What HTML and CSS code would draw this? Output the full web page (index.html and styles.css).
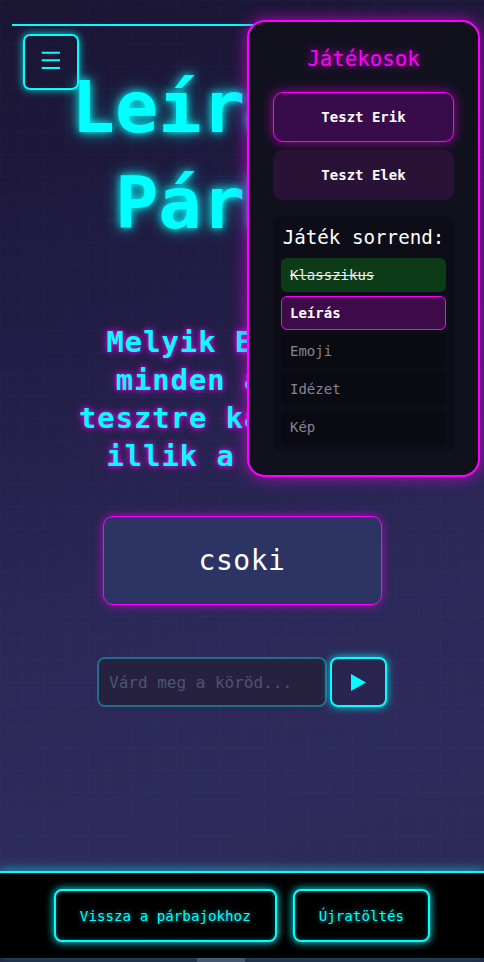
FILE: index.html
```html
<!DOCTYPE html>
<html lang="hu">
<head>
<meta charset="utf-8">
<title>Leírásos Párbaj</title>
<link rel="stylesheet" href="styles.css">
</head>
<body>
<div class="app">
  <main class="main">
    <div class="topline"></div>
    <h1 class="title">Leírásos<br>Párbaj</h1>
    <h2 class="question">Melyik Elekre a<br>minden alapján<br>tesztre kapott szó<br>illik a jobban?</h2>
    <div class="card">csoki</div>
    <div class="answer">
      <input class="answer-input" type="text" placeholder="Várd meg a köröd..." readonly>
      <button class="send-btn" type="button" aria-label="Küldés">
        <svg width="15" height="17" viewBox="0 0 15 17"><path d="M0 0 L15 8.5 L0 17 Z" fill="#00ffff"/></svg>
      </button>
    </div>
  </main>
  <footer class="footer">
    <button class="foot-btn" type="button">Vissza a párbajokhoz</button>
    <button class="foot-btn" type="button">Újratöltés</button>
  </footer>
  <div class="hscroll"><div class="hscroll-thumb"></div></div>

  <button class="menu-btn" type="button" aria-label="Menü">
    <svg width="52" height="52" viewBox="0 0 52 52"><path d="M16.7 16.7 H35 M16.7 24.3 H35 M16.7 32 H35" stroke="#00ffff" stroke-width="2" fill="none"/></svg>
  </button>

  <aside class="panel">
    <h3 class="panel-title">Játékosok</h3>
    <div class="players">
      <div class="player player-active">Teszt Erik</div>
      <div class="player">Teszt Elek</div>
    </div>
    <div class="order">
      <div class="order-title">Játék sorrend:</div>
      <div class="order-list">
        <div class="order-item done">Klasszikus</div>
        <div class="order-item current">Leírás</div>
        <div class="order-item">Emoji</div>
        <div class="order-item">Idézet</div>
        <div class="order-item">Kép</div>
      </div>
    </div>
  </aside>
</div>
</body>
</html>
```

FILE: styles.css
```css
* {
  box-sizing: border-box;
  margin: 0;
  padding: 0;
}

html, body {
  height: 100%;
}

body {
  font-family: "DejaVu Sans Mono", "Liberation Mono", monospace;
  background: #1b1734;
  overflow: hidden;
}

.app {
  position: relative;
  height: 962px;
  display: flex;
  flex-direction: column;
  background:
    linear-gradient(rgba(120, 200, 255, 0.025) 1px, transparent 1px),
    linear-gradient(90deg, rgba(120, 200, 255, 0.025) 1px, transparent 1px),
    linear-gradient(165deg, #1a1532 0%, #211c44 30%, #2b2858 60%, #2e2b5c 80%, #2b2852 100%);
  background-size: 22px 22px, 22px 22px, 100% 100%;
}

.main {
  flex: 1;
  display: flex;
  flex-direction: column;
  align-items: center;
}

.topline {
  align-self: stretch;
  margin: 24px 12px 0;
  height: 2px;
  background: #00ffff;
}

.title {
  margin-top: 33px;
  padding-left: 6px;
  font-size: 72px;
  line-height: 96px;
  font-weight: bold;
  color: #00ffff;
  text-align: center;
  text-shadow: 0 0 8px #00ffff, 0 0 18px rgba(0, 255, 255, 0.55);
}

.question {
  margin-top: 72px;
  padding-left: 4px;
  font-size: 28.8px;
  line-height: 38px;
  letter-spacing: 1px;
  font-weight: bold;
  color: #00ffff;
  text-align: center;
  text-shadow: 0 0 5px rgba(255, 0, 255, 0.9), 0 0 10px rgba(255, 0, 255, 0.5);
}

.card {
  margin-top: 41px;
  width: 279px;
  height: 89px;
  display: flex;
  align-items: center;
  justify-content: center;
  background: #2c3463;
  border: 1.5px solid #ff00ff;
  border-radius: 10px;
  box-shadow: 0 0 10px rgba(255, 0, 255, 0.6);
  color: #ffffff;
  font-size: 28px;
  letter-spacing: 0.5px;
}

.answer {
  margin-top: 52px;
  display: flex;
  gap: 3px;
}

.answer-input {
  width: 230px;
  height: 50px;
  background: #25213f;
  border: 2px solid #1c6e8b;
  border-radius: 8px;
  padding: 0 10px;
  font-family: "DejaVu Sans Mono", monospace;
  font-size: 16px;
  color: #ffffff;
  outline: none;
}

.answer-input::placeholder {
  color: #4f5471;
}

.send-btn {
  width: 57px;
  height: 50px;
  border: 2px solid #00ffff;
  border-radius: 8px;
  background: #2a2550;
  box-shadow: 0 0 8px rgba(0, 255, 255, 0.8);
  display: flex;
  align-items: center;
  justify-content: center;
}

.footer {
  height: 87px;
  background: #000000;
  border-top: 2px solid #00ffff;
  box-shadow: 0 -2px 10px rgba(0, 255, 255, 0.5);
  display: flex;
  justify-content: center;
  align-items: center;
  gap: 16px;
  position: relative;
}

.foot-btn {
  height: 53px;
  padding: 0 24px;
  border: 2px solid #00ffff;
  border-radius: 8px;
  background: #000000;
  color: #00ffff;
  font-family: "DejaVu Sans Mono", monospace;
  font-size: 14.2px;
  box-shadow: 0 0 8px #00ffff, inset 0 0 5px rgba(0, 255, 255, 0.35);
  text-shadow: 0 0 5px rgba(0, 255, 255, 0.6);
}

.hscroll {
  height: 4px;
  background: #241e39;
  padding-left: 197px;
}

.hscroll-thumb {
  width: 48px;
  height: 100%;
  background: #4b4660;
}

.menu-btn {
  position: absolute;
  top: 34px;
  left: 23px;
  width: 56px;
  height: 56px;
  border: 2px solid #00ffff;
  border-radius: 7px;
  background: transparent;
  box-shadow: 0 0 8px rgba(0, 255, 255, 0.8);
  display: flex;
}

.panel {
  position: absolute;
  top: 20px;
  left: 247px;
  width: 233px;
  padding: 25px 24px 24px;
  border: 2px solid #ff00ff;
  border-radius: 18px;
  background: #11111e;
  box-shadow: 0 0 16px rgba(255, 0, 255, 0.65);
}

.panel-title {
  font-size: 20.8px;
  line-height: 25px;
  font-weight: normal;
  color: #ff00ff;
  text-align: center;
  text-shadow: 0 0 8px rgba(255, 0, 255, 0.8);
}

.players {
  margin-top: 20px;
  display: flex;
  flex-direction: column;
  gap: 8px;
}

.player {
  height: 50px;
  display: flex;
  align-items: center;
  justify-content: center;
  border: 1px solid transparent;
  border-radius: 10px;
  background: #2a1237;
  color: #ffffff;
  font-size: 14px;
  font-weight: bold;
}

.player-active {
  background: #380c4a;
  border-color: #ff00ff;
  box-shadow: 0 0 12px rgba(255, 0, 255, 0.6);
}

.order {
  margin-top: 16px;
  padding: 10px 8px 7px;
  border-radius: 8px;
  background: #0d0d17;
}

.order-title {
  font-size: 19.2px;
  line-height: 23px;
  color: #ffffff;
  text-align: center;
  margin-bottom: 9px;
}

.order-list {
  display: flex;
  flex-direction: column;
  gap: 4px;
}

.order-item {
  height: 34px;
  display: flex;
  align-items: center;
  padding-left: 8px;
  border: 1px solid transparent;
  border-radius: 6px;
  background: #0a0a13;
  color: #85858f;
  font-size: 14px;
}

.order-item.done {
  background: #0b3c17;
  color: #f0f0f0;
  text-decoration: line-through;
}

.order-item.current {
  background: #3e0a48;
  border-color: #ff00ff;
  color: #ffffff;
  font-weight: bold;
}
```
